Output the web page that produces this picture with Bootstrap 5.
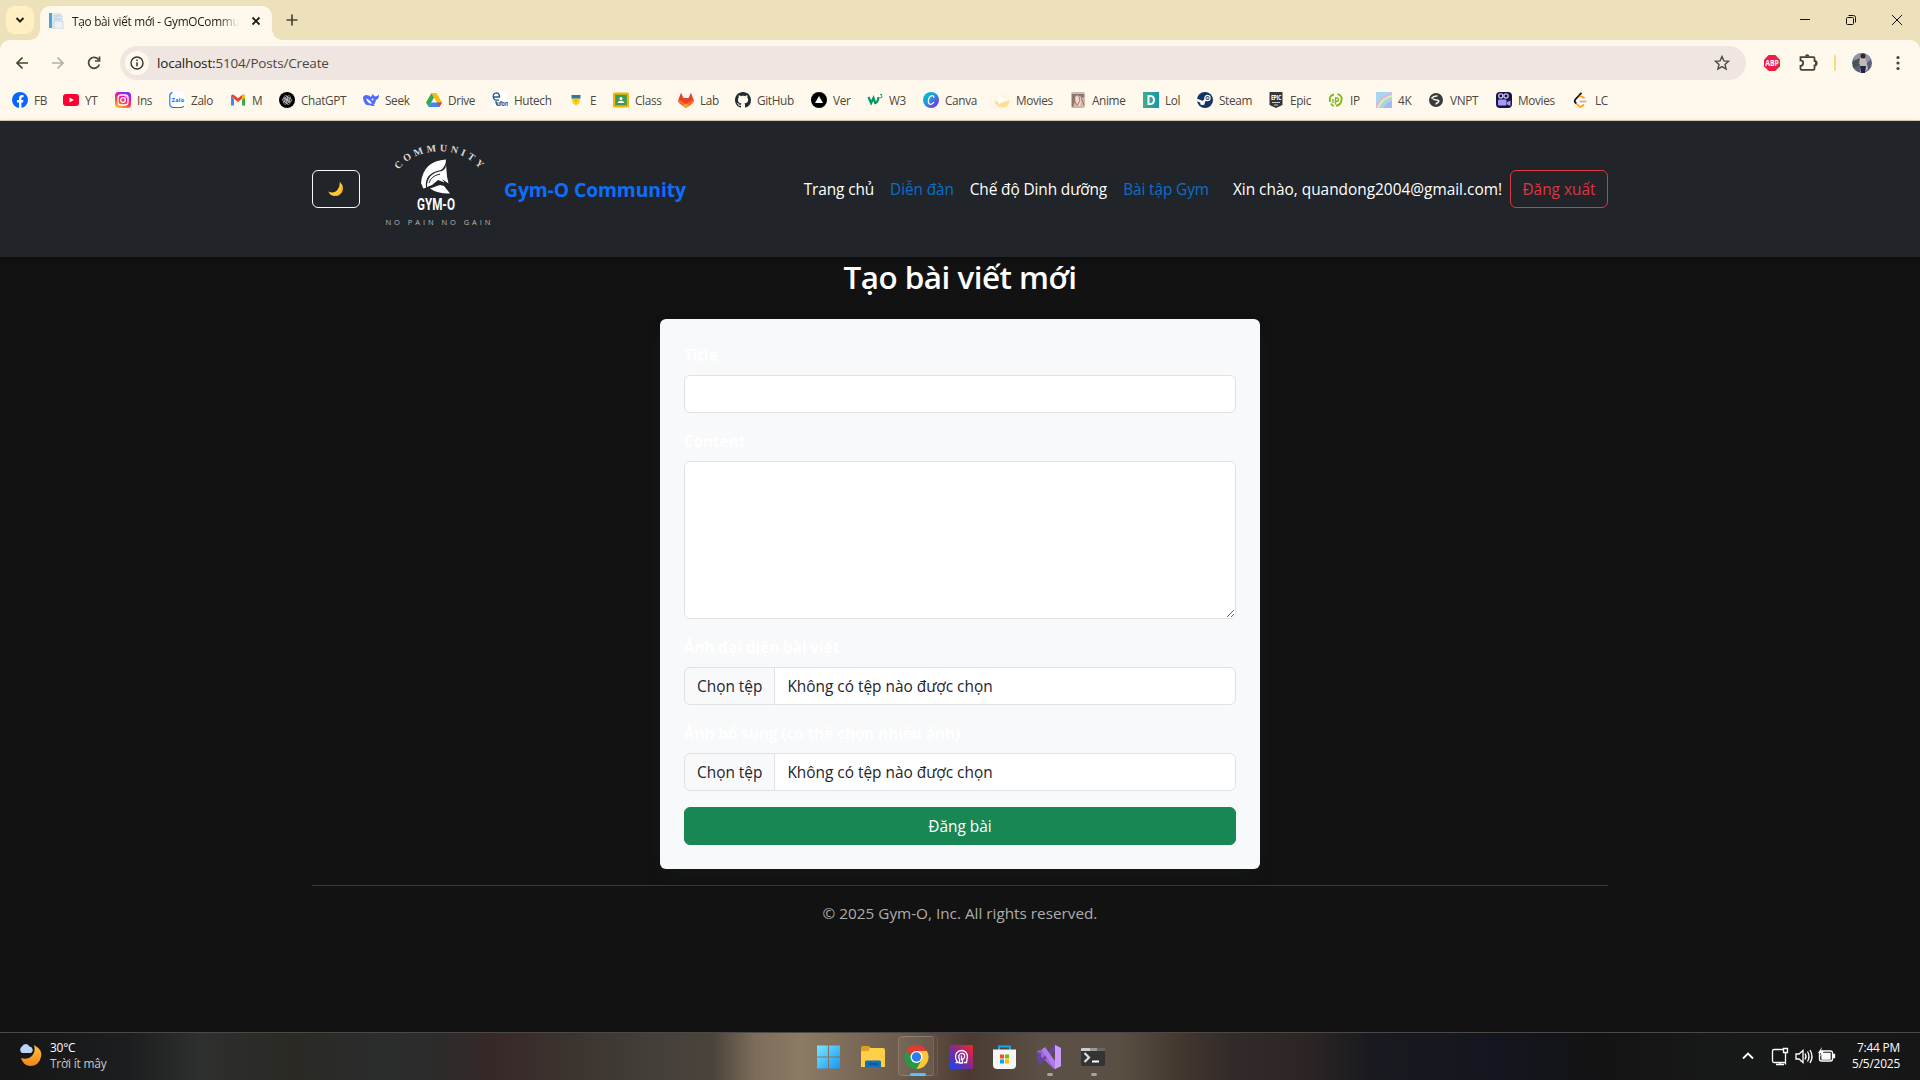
<!DOCTYPE html>
<html lang="vi">
<head>
<meta charset="utf-8">
<title>Tạo bài viết mới - GymOCommunity</title>
<link href="https://cdn.jsdelivr.net/npm/bootstrap@5.3.0/dist/css/bootstrap.min.css" rel="stylesheet">
<style>
body{font-family:"Open Sans","Noto Sans",sans-serif;font-size:15.4px;line-height:24px;background:#121212;color:#fff;height:1080px;overflow:hidden}
svg{display:block;flex:none}
/* browser window */
.tabstrip{height:40px;background:#ede1bb;padding-left:6px}
.tab-search{width:28px;height:28px;border-radius:9px;background:#ffefc1;margin:6px 6px 0 0}
.tab-open{width:232px;height:34px;margin-top:6px;border-radius:10px 10px 0 0;background:#fff9ed;padding:0 9px 5px 8px;position:relative}
.tab-open::before,.tab-open::after{content:"";position:absolute;bottom:0;width:10px;height:10px}
.tab-open::before{left:-10px;background:radial-gradient(circle at 0 0,transparent 9.5px,#fff9ed 10px)}
.tab-open::after{right:-10px;background:radial-gradient(circle at 100% 0,transparent 9.5px,#fff9ed 10px)}
.tab-name{width:167px;overflow:hidden;white-space:nowrap;font-size:11.8px;letter-spacing:-.27px;color:#1f1c13;-webkit-mask-image:linear-gradient(90deg,#000 88%,transparent);mask-image:linear-gradient(90deg,#000 88%,transparent)}
.win-controls{margin-left:auto;width:140px}
.toolbar-wrap{background:#ede1bb}
.tools{height:46px;background:#fff9ed;border-radius:10px 10px 0 0}
.omnibox{width:1626px;height:34px;border-radius:17px;background:#efe6e1;margin-left:16px;padding:0 15px 0 5px;color:#4b473f;font-size:13.5px;letter-spacing:-.17px}
.omnibox b{font-weight:400;color:#1e1b13}
.site-info{width:24px;height:24px;border-radius:50%;background:#fff9ed}
.bookmarks{height:35px;background:#fff9ed;border-bottom:1px solid #ddd2b2;display:grid;align-items:center;padding:0 0 6px 12px;font-size:11.8px;letter-spacing:-.35px;color:#4b473c;grid-template-columns:51px 52px 54px 61px 49px 84px 63px 66px 76px 45px 65px 57px 76px 56px 56px 71px 76px 73px 54px 71px 60px 48px 52px 68px 77px 50px}
.bookmarks>div{display:flex;align-items:center;gap:6px;white-space:nowrap}
/* site */
.site-nav{height:136px;background:#212529;box-shadow:0 2px 5px rgba(0,0,0,.3)}
.btn{font-size:15.4px;line-height:24px;padding-top:7px;padding-bottom:5px}
.theme-btn{width:48px;height:38px}
.brand-name{font-size:19.3px;font-weight:700;color:#0d6efd;letter-spacing:-.08px;padding-top:2px}
.menu-link{color:#fff;text-decoration:none;white-space:nowrap;padding-top:2px;letter-spacing:-.11px}
.menu-link.alt{color:#0a6fc9}
.menu-user{letter-spacing:0}
.logout-btn{padding-left:11.5px;padding-right:11.5px}
.page-title{font-size:31.4px;line-height:38.4px;font-weight:600;margin-bottom:23px;padding-top:1px;letter-spacing:-.5px}
.post-form{width:600px;background:#f8f9fa;padding:24px}
.post-form .form-label{display:block;height:24px;font-weight:700;font-size:15.2px;color:#fff;margin-bottom:8px}
.form-control,.input-group-text{font-size:15.4px;line-height:24px;height:38px;padding-top:7px;padding-bottom:5px;background:#fff;color:#212529;border-color:#dee2e6}
.input-group-text{background:#f8f9fa}
textarea.form-control{height:158px}
.site-footer{border-top:1px solid #343638;color:#adadad;margin-top:16px;padding-top:15px;font-size:15.3px}
/* taskbar */
.taskbar{height:48px;border-top:1px solid #4b4947;background:linear-gradient(90deg,#151515 0,#1c1e1f 130px,#2e302f 200px,#2a2924 290px,#2b2d2d 390px,#2e2b2a 450px,#372828 490px,#3b322e 560px,#433f39 650px,#4b443b 713px,#7c6d5a 755px,#8b7a64 800px,#6d5c4c 900px,#4b3a32 970px,#5b5045 1040px,#5a4f43 1120px,#43382f 1180px,#332b2a 1230px,#2e2625 1300px,#191a20 1370px,#14161f 1500px,#131314 1600px,#181919 1720px,#161617 100%)}
.weather{width:811px;padding-left:17px;font-size:11.9px;line-height:16px;letter-spacing:-.2px}
.weather-icon{margin-bottom:4px}
.weather-text{margin-left:7px;margin-bottom:3px}
.weather-note{color:#c8c8c8}
.app-slot{width:44px;height:47px;position:relative}
.run-dot{position:absolute;left:16px;top:40px;width:6px;height:3px;border-radius:2px;background:#aaa39d}
.run-dot.on{left:11px;width:16px;background:#4cc2ff}
.app-slot.active::before,.app-slot.active::after{content:"";position:absolute;left:-1px;top:3px;width:36px;height:40px;border-radius:4px;background:rgba(255,255,255,.07);border:1px solid rgba(255,255,255,.1)}
.app-slot.active::after{left:3px;background:none;border-left:0}
.app-slot svg{position:relative}
.clock{font-size:11.9px;line-height:16px;text-align:right;letter-spacing:-.2px;width:58px;margin-bottom:3px}
</style>
</head>
<body class="d-flex flex-column">
<header>
  <div class="tabstrip d-flex align-items-start">
    <div class="tab-search d-flex align-items-center justify-content-center"><svg width="10" height="8" viewBox="0 0 10 8"><path d="M1.500 2 5 5.500 8.500 2" fill="none" stroke="#222" stroke-width="2"/></svg></div>
    <div class="tab-open d-flex align-items-center">
      <svg width="16" height="16" viewBox="0 0 16 16"><path d="M1 0h3v15H1z" fill="#4ba3d6"/><path d="M4 0h8l3 3v13H4z" fill="#dfe8ef"/><path d="M6 3h5M6 6h7M6 9h7M6 12h7" stroke="#b3c6d5"/><path d="M12 0v3h3M6 16V8h9v8z" fill="#edf1f5" stroke="#b8c9d6" stroke-width=".6"/></svg>
      <span class="tab-name ms-2">Tạo bài viết mới - GymOCommunity</span>
      <svg class="ms-auto" width="14" height="14" viewBox="0 0 14 14"><path d="m3.500 3.500 7 7m0-7-7 7" stroke="#1f1c13" stroke-width="1.800"/></svg>
    </div>
    <svg class="mt-2 ms-2" width="24" height="24" viewBox="0 0 24 24"><path d="M12 6.500v11M6.500 12h11" stroke="#4b4430" stroke-width="1.700"/></svg>
    <svg class="win-controls" width="140" height="40" viewBox="0 0 140 40" fill="none" stroke="#111"><path d="M20 19.500h10M112 15l10 10m0-10-10 10"/><rect x="66.500" y="17.500" width="7" height="7" rx="1"/><path d="M68.500 15.500h5a2 2 0 0 1 2 2v5"/></svg>
  </div>
  <div class="toolbar-wrap"><div class="tools d-flex align-items-center">
    <svg width="104" height="46" viewBox="0 0 104 46" fill="none" stroke="#4a442c" stroke-width="1.700"><path d="M28 23H17m5.500-5.500L17 23l5.500 5.500"/><path stroke="#b5b0a1" d="M52 23h11m-5.500-5.500L63 23l-5.500 5.500"/><path d="M98.500 19.500a5.500 5.500 0 1 0 .8 5M99.500 16.500v4.500H95"/></svg>
    <div class="omnibox d-flex align-items-center">
      <div class="site-info d-flex align-items-center justify-content-center"><svg width="14" height="14" viewBox="0 0 14 14"><circle cx="7" cy="7" r="6" fill="none" stroke="#333" stroke-width="1.400"/><path d="M7 6.200v4M7 3.600v1.500" stroke="#333" stroke-width="1.500"/></svg></div>
      <span class="ms-2"><b>localhost:</b>5104/Posts/Create</span>
      <svg class="ms-auto" width="18" height="18" viewBox="0 0 18 18"><path d="m9 2.500 1.900 4.400 4.600.4-3.500 3.100 1.100 4.700L9 12.600l-4.100 2.500L6 10.400 2.500 7.300l4.600-.4z" fill="none" stroke="#4f4a45" stroke-width="1.400"/></svg>
    </div>
    <svg width="174" height="46" viewBox="0 0 174 46"><path d="m22.700 15 6.600 0 4.700 4.700v6.600L29.300 31h-6.600L18 26.300v-6.600z" fill="#ed1e45"/><text x="19.200" y="26" font-size="8" font-weight="700" fill="#fff" textLength="13.600" lengthAdjust="spacingAndGlyphs">ABP</text>
      <path d="M55.500 17.200h13a1 1 0 0 1 1 1V21a2.200 2.200 0 0 1 0 4.400v3.400a1 1 0 0 1-1 1h-12a1 1 0 0 1-1-1v-3a2.700 2.700 0 0 0 0-5.400z" transform="translate(-1 0)" fill="none" stroke="#4a442c" stroke-width="1.800"/><path d="M59 16.500a2.200 2.200 0 0 1 4.400 0zM69 21a2.200 2.200 0 0 1 0 4.400z" fill="#4a442c"/>
      <rect x="88" y="15" width="2" height="16" rx="1" fill="#f8dc79"/><circle cx="116" cy="23" r="10" fill="#5d6078"/><path d="M108 17a10 10 0 0 1 17 2l-5 5h-13z" fill="#9295aa"/><path d="M107 21l7-3-2 8-5 2z" fill="#445848"/><path d="M114 18q4-3 6 2l2 9-3 3h-5z" fill="#c4b9b6"/><circle cx="117" cy="16" r="2.500" fill="#35242a"/><path d="M114 26h6l-1 7h-4z" fill="#202545"/>
      <g fill="#4a442c"><circle cx="152" cy="17.500" r="1.600"/><circle cx="152" cy="23" r="1.600"/><circle cx="152" cy="28.500" r="1.600"/></g></svg>
  </div></div>
  <nav class="bookmarks">
    <div><svg width="16" height="16" viewBox="0 0 16 16"><circle cx="8" cy="8" r="8" fill="#0866ff"/><path d="M7 16v-5.500H5V8h2V6.500C7 4 8.300 3 10 3l1.500.1v2.200h-1C9.500 5.300 9.400 6 9.400 6.600V8h2l-.4 2.500H9.400V16z" fill="#fff"/></svg>FB</div>
    <div><svg width="16" height="16" viewBox="0 0 16 16"><rect y="2" width="16" height="12" rx="3" fill="#ff0033"/><path d="m6.500 5.500 4.300 2.500-4.300 2.500z" fill="#fff"/></svg>YT</div>
    <div><svg width="16" height="16" viewBox="0 0 16 16"><defs><linearGradient id="ig" x1=".2" y1="1" x2=".7" y2="0"><stop stop-color="#ffc837"/><stop offset=".35" stop-color="#ff4b33"/><stop offset=".65" stop-color="#f313a0"/><stop offset="1" stop-color="#7b2ff7"/></linearGradient></defs><rect width="16" height="16" rx="3.500" fill="url(#ig)"/><rect x="3" y="3" width="10" height="10" rx="3" fill="none" stroke="#fff" stroke-width="1.300"/><circle cx="8" cy="8" r="2.300" fill="none" stroke="#fff" stroke-width="1.300"/><circle cx="11" cy="5" r=".8" fill="#fff"/></svg>Ins</div>
    <div><svg width="16" height="16" viewBox="0 0 16 16"><rect width="16" height="16" rx="4" fill="#fff"/><path d="M3.500.5Q.8 1 .8 4v8q0 3.500 4 3.500h7q2 0 3-1.500" fill="none" stroke="#1473e6" stroke-width="1.100"/><text x="2.800" y="10" font-size="5.500" font-weight="700" fill="#0068ff" textLength="12">Zalo</text></svg>Zalo</div>
    <div><svg width="16" height="16" viewBox="0 0 16 16"><path d="M1 4v9.500h3V7z" fill="#4285f4"/><path d="M15 4v9.500h-3V7z" fill="#34a853"/><path d="M1 4.200Q1.500 1.500 4 3l4 3.200L12 3q2.500-1.500 3 1.200L8 10z" fill="#ea4335"/><path d="M12 3q2.500-1.500 3 1.200V6l-3 2z" fill="#fbbc04"/></svg>M</div>
    <div><svg width="16" height="16" viewBox="0 0 16 16"><circle cx="8" cy="8" r="8" fill="#000"/><g fill="none" stroke="#ccc" stroke-width=".6"><rect x="5" y="3.500" width="3.500" height="7" rx="1.700" id="kn"/><use href="#kn" transform="rotate(60 8 8)"/><use href="#kn" transform="rotate(120 8 8)"/><use href="#kn" transform="rotate(180 8 8)"/><use href="#kn" transform="rotate(240 8 8)"/><use href="#kn" transform="rotate(300 8 8)"/></g></svg>ChatGPT</div>
    <div><svg width="16" height="16" viewBox="0 0 16 16"><path d="M0 6q0-2.500 3-3 3 0 5 2Q9 3 10 2q1 2.500 2.500 2.500Q15 4 16 2.500 16 7 13 8q-.5 3-2.500 4.500l1.500 1.200q-3 1-5-.4Q1 14 0 6z" fill="#4d6bfe"/><path d="M3 6.500q3 .5 6 5-4 1-6-5z" fill="#fff9ed"/><circle cx="9.500" cy="7.500" r="1" fill="#fff9ed"/></svg>Seek</div>
    <div><svg width="16" height="16" viewBox="0 0 16 16"><path d="M5.500 1h5L16 10.500h-5z" fill="#fbbc04"/><path d="M5.500 1 8 5.500 2.700 15 0 10.500z" fill="#34a853"/><path d="M5.200 10.500H16L13.300 15H2.700z" fill="#4285f4"/><path d="M11 10.500h5L13.300 15z" fill="#ea4335"/></svg>Drive</div>
    <div><svg width="16" height="16" viewBox="0 0 16 16"><rect width="16" height="16" fill="#fff"/><path d="M1.500 5h6Q7.500.8 4.500.8 1 1 1.200 5 1.500 9 7 8M4 9q0 4 2 4" fill="none" stroke="#225a96" stroke-width="1.300"/><text x="4.500" y="14" font-size="7.500" font-weight="700" fill="#27528b" textLength="11.500" lengthAdjust="spacingAndGlyphs">ufon</text></svg>Hutech</div>
    <div><svg width="16" height="16" viewBox="0 0 16 16"><path d="M4 3h8v5q-.5 4-4 5.500Q4.500 12 4 8z" fill="#f8d126"/><path d="M3.500 3h9v3.500h-9z" fill="#2876ad"/><path d="M8 5.500 10 9 8 11.500 6 9z" fill="#ffb800"/></svg>E</div>
    <div><svg width="16" height="16" viewBox="0 0 16 16"><rect y=".5" width="16" height="15" rx="1.500" fill="#f4b400"/><rect x="2.200" y="2.700" width="11.600" height="10.600" fill="#3e9b57"/><circle cx="8" cy="6.500" r="1.500" fill="#fff"/><path d="M4.500 11Q5 8.800 8 8.800t3.500 2.200z" fill="#fff"/></svg>Class</div>
    <div><svg width="16" height="16" viewBox="0 0 16 16"><path d="M.3 8 3 .7 5.500 6h5L13 .7 15.700 8q.2 2-1.500 3.500L8 16l-6.200-4.500Q0 10 .3 8z" fill="#e24329"/><path d="m8 16 6.200-4.500Q16 10 15.700 8 13 8 8 12.500 3 8 .3 8 0 10 1.800 11.500z" fill="#fc6d26"/><path d="m8 16 3-2.200-3-2.300-3 2.300z" fill="#fca326"/></svg>Lab</div>
    <div><svg width="16" height="16" viewBox="0 0 16 16"><path fill="#24292f" d="M8 0C3.580 0 0 3.580 0 8c0 3.540 2.290 6.530 5.470 7.590.4.070.55-.17.55-.38 0-.19-.01-.82-.01-1.490-2.010.37-2.530-.49-2.690-.94-.09-.23-.48-.94-.82-1.130-.28-.15-.68-.52-.01-.53.63-.01 1.080.58 1.230.82.720 1.210 1.870.87 2.330.66.070-.52.280-.87.510-1.070-1.780-.2-3.640-.89-3.640-3.950 0-.87.310-1.590.820-2.150-.08-.2-.36-1.020.080-2.120 0 0 .67-.21 2.200.820.640-.18 1.320-.27 2-.27s1.360.09 2 .27c1.530-1.040 2.200-.82 2.200-.82.440 1.100.160 1.920.080 2.120.510.560.820 1.270.820 2.150 0 3.070-1.870 3.750-3.650 3.950.290.250.540.730.540 1.480 0 1.070-.01 1.930-.01 2.200 0 .21.150.46.550.38A8 8 0 0 0 16 8c0-4.420-3.580-8-8-8"/></svg>GitHub</div>
    <div><svg width="16" height="16" viewBox="0 0 16 16"><circle cx="8" cy="8" r="8" fill="#000"/><path d="m8 4 4 7H4z" fill="#fff"/></svg>Ver</div>
    <div><svg width="16" height="16" viewBox="0 0 16 16"><path d="m1.500 5 2.600 6L6.500 6l1.700 5Q11 10.500 11.500 5" fill="none" stroke="#059862" stroke-width="2.300"/><path d="M13 2.500h2l-1 1.300q1.500.2 1 1.500-.7 1-2 .2" fill="none" stroke="#059862" stroke-width=".8"/></svg>W3</div>
    <div><svg width="16" height="16" viewBox="0 0 16 16"><defs><linearGradient id="cv" x1="0" y1=".2" x2=".8" y2="1"><stop stop-color="#00c4cc"/><stop offset=".5" stop-color="#2a8be0"/><stop offset="1" stop-color="#7d2ae8"/></linearGradient></defs><circle cx="8" cy="8" r="8" fill="url(#cv)"/><path d="M10.800 5.800Q11 3.500 9 3.600 6.500 4 5.500 7.500 4.800 12 7.500 12.300q2 0 3.500-2.300" fill="none" stroke="#fff" stroke-width="1.300"/></svg>Canva</div>
    <div><svg width="16" height="16" viewBox="0 0 16 16"><circle cx="8" cy="8" r="7.500" fill="#fff6e0"/><path d="M0 9q8 3 15.500-1Q15 15.500 8 15.500 2 15 0 9z" fill="#fcdf94"/><path d="m4.500 3.500 7.500 4.500-7.500 4.500z" fill="#fff"/></svg>Movies</div>
    <div><svg width="16" height="16" viewBox="0 0 16 16"><rect x="1" width="14" height="16" rx="2" fill="#cdb8a9"/><path d="M2 2h12v4L9 4 5 9 3 15H2z" fill="#8a7770"/><path d="m5 5 3-2 4 3-2 8H6z" fill="#efd9cf"/><path d="m8 2 2 6-3 6M11 5l3 8M4 8l3 5" stroke="#a9635b" stroke-width=".9" fill="none"/></svg>Anime</div>
    <div><svg width="16" height="16" viewBox="0 0 16 16"><defs><linearGradient id="dd"><stop stop-color="#40ad8b"/><stop offset="1" stop-color="#1598a5"/></linearGradient></defs><rect width="16" height="16" fill="url(#dd)"/><path d="M5.500 4h2q3.500.5 3.500 4t-3.500 4h-2z" fill="none" stroke="#fff" stroke-width="2"/></svg>Lol</div>
    <div><svg width="16" height="16" viewBox="0 0 16 16"><circle cx="8" cy="8" r="8" fill="#133463"/><path d="m0 8 6 2.500 3-3.500" stroke="#fff" stroke-width="2.500" fill="none"/><circle cx="5.500" cy="11" r="2.300" fill="#fff"/><circle cx="10.500" cy="6" r="2.600" fill="#133463" stroke="#fff" stroke-width="1.200"/><circle cx="10.500" cy="6" r="1.300" fill="#ccd"/></svg>Steam</div>
    <div><svg width="16" height="16" viewBox="0 0 16 16"><path d="M1.500 0h13v13L8 16l-6.500-3z" fill="#373737"/><text x="3" y="8" font-size="6.500" font-weight="700" fill="#fff" textLength="10" lengthAdjust="spacingAndGlyphs">EPIC</text><path d="M4 10.500h8M6 13h4" stroke="#ccc"/></svg>Epic</div>
    <div><svg width="16" height="16" viewBox="0 0 16 16"><path d="M2 10Q.5 3.500 6 2.500M9.500 2.200q5 1.500 4 6-1 5-5.500 5.600M2.800 11.500q1.500 2 3 2.500" fill="none" stroke="#83b81a" stroke-width="1.900"/><path d="M7.500 12.500V6h2q2 1.700 0 3.300h-2M5 7v4" fill="none" stroke="#83b81a" stroke-width="1.400"/></svg>IP</div>
    <div><svg width="16" height="16" viewBox="0 0 16 16"><rect width="16" height="16" fill="#a9d4ee"/><path d="M0 16Q3 5 16 2" fill="none" stroke="#dfb4e4" stroke-width="2"/><path d="M2 16Q5 7 16 4" fill="none" stroke="#e9ebb0" stroke-width="2"/><path d="M4 16Q7 9 16 6" fill="none" stroke="#a5dcd0" stroke-width="2"/><path d="M7 16Q9 11 16 9v7z" fill="#a4b8f2"/></svg>4K</div>
    <div><svg width="16" height="16" viewBox="0 0 16 16"><circle cx="8" cy="8" r="7" fill="#373b3d"/><path d="M3.500 6.500q2-3 6-2.500M5 6.800q2 1.700 4 1.200 3 .5 1 2.500-2 .5-2 2" fill="none" stroke="#fff9ed" stroke-width="1.500"/></svg>VNPT</div>
    <div><svg width="16" height="16" viewBox="0 0 16 16"><rect width="16" height="16" rx="4" fill="#19163a"/><g fill="none" stroke="#c9c0ff" stroke-width="1.300"><circle cx="4.800" cy="4" r="2.100"/><circle cx="10" cy="4" r="2.100"/></g><rect x="2" y="7.500" width="8.500" height="6" rx="1" fill="#a399ff"/><path d="m11 10 3.500-1.500V14L11 12.500z" fill="#a399ff"/></svg>Movies</div>
    <div><svg width="16" height="16" viewBox="0 0 16 16"><path d="M8.500.8 2.300 7.500Q1 9 2.500 10.700l1 1" fill="none" stroke="#111" stroke-width="1.800"/><path d="m3.300 11.500 2.500 2.600q2 1.500 4-.4l1.200-1.200M6 4.700q3-1 5.500 1.800" fill="none" stroke="#ffa116" stroke-width="1.800"/><path d="M6.500 9.500h7" stroke="#b3b3b3" stroke-width="1.700"/></svg>LC</div>
  </nav>
</header>

<div class="site-nav d-flex align-items-center">
  <div class="container d-flex align-items-center">
    <button class="btn btn-outline-light theme-btn d-flex align-items-center justify-content-center p-0"><svg width="16" height="16" viewBox="0 0 16 16"><path d="M11.500.5q5 4.500 2.700 9.700Q11.500 15.500 6 15 2 14.500.3 10.500q5 2.500 8.700-1Q12.500 5.500 11.500.5z" fill="#fcc933"/><path d="M13 3q3.500 6-.5 10-3.500 3-8 1.500 6 .5 8-4 1.500-3.500.5-7.500z" fill="#f0a92e"/></svg></button>
    <svg width="144" height="100" viewBox="0 0 144 100">
      <path id="arc" d="M38.500 31Q53 12.500 80 12.300T123 34" fill="none"/>
      <text font-size="10" font-weight="700" fill="#d8d8d8" font-family="Liberation Serif,serif"><textPath href="#arc" textLength="92">COMMUNITY</textPath></text>
      <path d="M86 20.500Q63 22 61 44l2.300 5.500 2.700-.8Q64 34 81 31 86 27 86 20.500z" fill="#fff"/>
      <path d="M82 32Q67 34 67 48l5-2 6-5 6.500 2.500L82 40l6.500 4.500-1.500-7-1-12Q86 30 82 32z" fill="#fff"/>
      <path d="M70 49.500 80 46l4 1 6 7.500Q78 55 70 49.500z" fill="#fff"/>
      <path d="M69 44q2-7 11-9" fill="none" stroke="#212529"/>
      <text x="57" y="71" font-size="16" font-weight="700" fill="#fff" font-family="Roboto,sans-serif" textLength="38" lengthAdjust="spacingAndGlyphs">GYM-O</text>
      <text x="25.500" y="86" font-size="7.500" fill="#b9babb" textLength="105">NO PAIN NO GAIN</text>
    </svg>
    <a class="brand-name text-decoration-none">Gym-O Community</a>
    <div class="d-flex align-items-center ms-auto">
      <a class="menu-link me-3">Trang chủ</a><a class="menu-link alt me-3">Diễn đàn</a><a class="menu-link me-3">Chế độ Dinh dưỡng</a><a class="menu-link alt me-4">Bài tập Gym</a>
      <span class="menu-link menu-user me-2">Xin chào, quandong2004@gmail.com!</span>
      <button class="btn btn-outline-danger logout-btn">Đăng xuất</button>
    </div>
  </div>
</div>
<main class="container d-flex flex-column align-items-center">
  <h2 class="page-title">Tạo bài viết mới</h2>
  <form class="post-form rounded shadow">
    <label class="form-label">Title</label>
    <input class="form-control mb-3">
    <label class="form-label">Content</label>
    <textarea class="form-control mb-3"></textarea>
    <label class="form-label">Ảnh đại diện bài viết</label>
    <div class="input-group mb-3"><span class="input-group-text">Chọn tệp</span><div class="form-control">Không có tệp nào được chọn</div></div>
    <label class="form-label">Ảnh bổ sung (có thể chọn nhiều ảnh)</label>
    <div class="input-group mb-3"><span class="input-group-text">Chọn tệp</span><div class="form-control">Không có tệp nào được chọn</div></div>
    <button type="button" class="btn btn-success w-100">Đăng bài</button>
  </form>
  <footer class="site-footer w-100 text-center"><span>© 2025 Gym-O, Inc. All rights reserved.</span></footer>
</main>

<div class="taskbar d-flex align-items-center mt-auto">
  <div class="weather d-flex align-items-center">
    <svg class="weather-icon" width="26" height="26" viewBox="0 0 26 26"><defs><linearGradient id="mn" x2="0" y2="1"><stop stop-color="#ffc636"/><stop offset="1" stop-color="#f5821f"/></linearGradient></defs><path d="M17 3q9 5 7 12-2 9-11 9-7-1-9-8 7 2 11-2 4-5 2-11z" fill="url(#mn)"/><path d="M5 11a3.800 3.800 0 0 1 0-6.500 4 4 0 0 1 7.500 0A3.500 3.500 0 0 1 14 11z" fill="#bcd3fa"/></svg>
    <div class="weather-text"><div>30°C</div><div class="weather-note">Trời ít mây</div></div>
  </div>
  <div class="app-slot ps-1 d-flex align-items-center"><svg width="28" height="24" viewBox="0 0 28 24"><defs><linearGradient id="wn" x2="1" y2="1"><stop stop-color="#79e6ff"/><stop offset="1" stop-color="#1597f7"/></linearGradient></defs><path d="M2 .5h11v11H2zM14 .5h11v11H14zM2 12.500h11v11H2zM14 12.500h11v11H14z" fill="url(#wn)"/></svg></div>
  <div class="app-slot d-flex align-items-center"><svg class="ms-1" width="28" height="24" viewBox="0 0 28 24"><path d="M2 3q0-2 2-2h6l3 3h-2L9 6H2z" fill="#dfa01c"/><path d="M2 6h7l2-3h13q2 0 2 2v17H2z" fill="#ffcf48"/><path d="M6 22v-5q0-1.500 1.500-1.500h13Q22 15.500 22 17v5z" fill="#1170b8"/><path d="M9 19h10" stroke="#07528f" stroke-width="1.500"/></svg></div>
  <div class="app-slot active d-flex align-items-center"><svg class="ms-1" width="28" height="24" viewBox="0 0 28 24"><g transform="translate(1.500 0)"><path d="M12 12 1.600 6A12 12 0 0 1 22.400 6z" fill="#e33b2e"/><path d="M12 12h-5.200L1.600 6A12 12 0 0 0 12 24l5.200-9z" fill="#269a43"/><path d="M12 6h10.400A12 12 0 0 1 12 24l5.200-9z" fill="#fcc934"/><circle cx="12" cy="12" r="6" fill="#fff"/><circle cx="12" cy="12" r="4.700" fill="#2e7ce9"/></g></svg><i class="run-dot on"></i></div>
  <div class="app-slot d-flex align-items-center"><svg class="ms-1" width="28" height="24" viewBox="0 0 28 24"><defs><linearGradient id="pu" x1="0" y1="1" x2="1" y2="0"><stop stop-color="#0d49ff"/><stop offset=".45" stop-color="#762a9e"/><stop offset="1" stop-color="#ff2222"/></linearGradient></defs><rect x="2" width="24" height="24" fill="url(#pu)"/><path d="M8.500 17.500H11q-4-5-1.500-9.500Q13 4 18 6.500q3.500 3 2 7.500l-.5 3.500H17M12.500 18.500v-4q-2-5 1.500-6 4.500-.5 3.500 4-1 2-3 2v-4M12.500 18h3v-3" fill="none" stroke="#fff" stroke-width="1.300"/></svg></div>
  <div class="app-slot d-flex align-items-center"><svg class="ms-1" width="28" height="24" viewBox="0 0 28 24"><path d="M8 5V1.500h11V5" fill="none" stroke="#1ba6e8" stroke-width="2"/><path d="M2 4.500h23V20q0 4-4 4H6q-4 0-4-4z" fill="#f6f6f6"/><path d="M9 9.500h4v4H9z" fill="#f25022"/><path d="M14 9.500h4v4h-4z" fill="#7fba00"/><path d="M9 14.500h4v4H9z" fill="#00a4ef"/><path d="M14 14.500h4v4h-4z" fill="#ffb900"/></svg></div>
  <div class="app-slot d-flex align-items-center"><svg class="ms-1" width="28" height="24" viewBox="0 0 28 24"><path d="M2 6.500 5 5l15 14v5h-1L2 8z" fill="#9a66dc"/><path d="M2 7v10l3 2L20 6V0L6 15V8z" fill="#6c42a4"/><path d="m6 5 4-3 10 14V0l6 3v18l-6 3z" fill="#b17af0"/><path d="M20 0l6 3v18l-6 3z" fill="#c99bfa"/></svg><i class="run-dot"></i></div>
  <div class="app-slot d-flex align-items-center"><svg class="ms-1" width="28" height="24" viewBox="0 0 28 24"><rect x="2" y="3" width="24" height="18" rx="1.500" fill="#333"/><path d="M2 6V4q0-1 1-1h8v3z" fill="#ccc"/><path d="M11 3h7v3h-7z" fill="#999"/><path d="M18 3h8v3h-8z" fill="#666"/><path d="m5.500 8 4.500 4.500L5.500 17" fill="none" stroke="#ddd" stroke-width="2.200"/><path d="M13 16.500h7" stroke="#fff" stroke-width="2"/></svg><i class="run-dot"></i></div>
  <svg class="ms-auto" width="104" height="47" viewBox="0 0 104 47" fill="none" stroke="#fff" stroke-width="1.300"><path d="m5 25.500 5-5 5 5" stroke-width="1.800"/><path d="M45 16.500H36q-1.500 0-1.500 1.500v10q0 1.500 1.500 1.500h11M38 31.500h8M42 29.500v2"/><path d="M45.500 15.500h4v4h-4zM47.500 20v11.500"/><path d="M58 21h3l4-3.500v12L61 26h-3zM67 20.500q2 3 0 6M69.500 18.500q3 5 0 10M72 17q4 6.500 0 13"/><rect x="81.500" y="18" width="13" height="10" rx="2"/><path d="M84 20.500h8V26h-8zM95.500 21.500h1v3h-1z" fill="#fff"/><path d="m84 14-4 6h3l-1 4 4-6h-3z" fill="#fff" stroke="none"/></svg>
  <div class="clock me-3"><div>7:44 PM</div><div>5/5/2025</div></div><span class="pe-1"></span>
</div>
<script src="https://cdn.jsdelivr.net/npm/bootstrap@5.3.0/dist/js/bootstrap.bundle.min.js"></script>
</body>
</html>
